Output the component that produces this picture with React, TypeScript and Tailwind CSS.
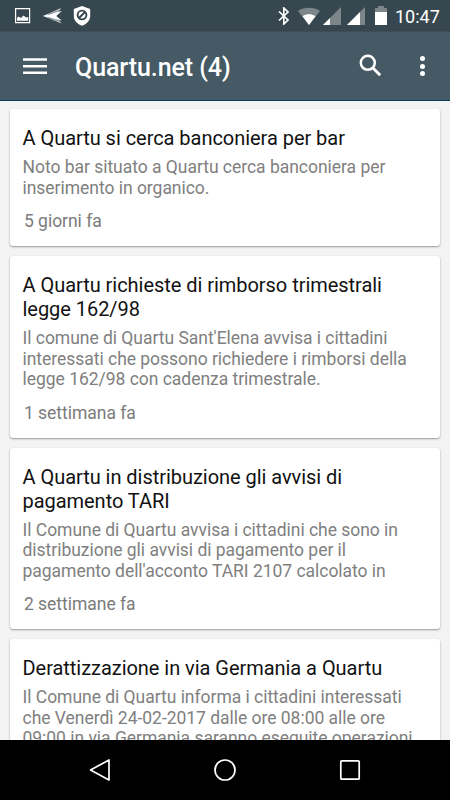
import type { ReactNode } from "react";

type NewsItem = {
  title: string[];
  text: string[];
  time?: string;
};

const news: NewsItem[] = [
  {
    title: ["A Quartu si cerca banconiera per bar"],
    text: ["Noto bar situato a Quartu cerca banconiera per", "inserimento in organico."],
    time: "5 giorni fa",
  },
  {
    title: ["A Quartu richieste di rimborso trimestrali", "legge 162/98"],
    text: [
      "Il comune di Quartu Sant'Elena avvisa i cittadini",
      "interessati che possono richiedere i rimborsi della",
      "legge 162/98 con cadenza trimestrale.",
    ],
    time: "1 settimana fa",
  },
  {
    title: ["A Quartu in distribuzione gli avvisi di", "pagamento TARI"],
    text: [
      "Il Comune di Quartu avvisa i cittadini che sono in",
      "distribuzione gli avvisi di pagamento per il",
      "pagamento dell'acconto TARI 2107 calcolato in",
    ],
    time: "2 settimane fa",
  },
  {
    title: ["Derattizzazione in via Germania a Quartu"],
    text: [
      "Il Comune di Quartu informa i cittadini interessati",
      "che Venerdì 24-02-2017 dalle ore 08:00 alle ore",
      "09:00 in via Germania saranno eseguite operazioni",
    ],
  },
];

function Line({ children }: { children: ReactNode }) {
  return <span className="block whitespace-nowrap">{children}</span>;
}

function StatusBar() {
  return (
    <div className="flex h-[31px] shrink-0 items-center bg-[#37474f] text-white">
      <svg className="ml-[15px] h-4 w-4" viewBox="0 0 16 16" fill="none">
        <path d="M.6.6h14v14H.6z" stroke="currentColor" strokeWidth="1.2" />
        <path d="M2 12.800V10l1.500-1.500L6 10l2.500-2.500L11 9.500l2.200-.5v3.800z" fill="currentColor" />
      </svg>
      <svg className="ml-[11px] h-4 w-[21px]" viewBox="0 0 21 16">
        <path d="M1 8 19 0l-4.500 8 5 7.500z" fill="#c3cbce" />
        <path d="M1 8 20 3l-6 5 6 4.500z" fill="white" />
        <path d="m6 6.500 13-4.500M6 9.500l13 4" stroke="#5b6a71" strokeWidth=".6" />
      </svg>
      <svg className="ml-[10px] h-5 w-[18px]" viewBox="0 0 18 20">
        <path d="M9 0 17.200 3v7c0 4.500-3.500 8-8.200 9.800C4.300 18 .8 14.500.8 10V3z" fill="white" />
        <circle cx="9" cy="9" r="4.400" fill="none" stroke="#37474f" strokeWidth="1.900" />
        <path d="m6 12 6-6" stroke="#37474f" strokeWidth="1.900" />
      </svg>
      <svg className="ml-auto h-[18px] w-3" viewBox="0 0 12 18" fill="none" stroke="currentColor" strokeWidth="1.700">
        <path d="m1 4.500 9 8.500-4.200 4V1L10 5l-9 8.500" />
      </svg>
      <svg className="ml-[8px] h-[18px] w-[22px]" viewBox="0 0 22 18">
        <path d="M0 4C6-.3 16-.3 22 4L11 18z" fill="#7c868b" />
        <path d="M4.500 9.300c4-2.600 9-2.600 13 0L11 18z" fill="white" />
      </svg>
      <svg className="ml-[3px] h-[18px] w-[18px]" viewBox="0 0 18 18">
        <path d="M0 18 18 0v18z" fill="#7c868b" />
        <path d="m0 18 7-7v7z" fill="white" />
      </svg>
      <svg className="ml-[6px] h-[18px] w-[18px]" viewBox="0 0 18 18">
        <path d="M0 18 18 0v18z" fill="#7c868b" />
        <path d="M0 18 13 5v13z" fill="white" />
      </svg>
      <svg className="ml-[9px] h-[19px] w-[14px]" viewBox="0 0 14 19">
        <path d="M1 2h3V0h6v2h3v4H1z" fill="#7c868b" />
        <path d="M1 6h12v13H1z" fill="white" />
      </svg>
      <span className="mr-[10px] ml-[7.5px] w-[45px] pt-[3px] text-[18px] leading-none whitespace-nowrap">10:47</span>
    </div>
  );
}

function Toolbar() {
  return (
    <header className="flex h-[70px] shrink-0 items-center border-t border-b border-t-[#3f4e56] border-b-[#07405a] bg-[#455a64] text-white">
      <svg className="ml-[23px] h-[17px] w-6" viewBox="0 0 24 17" fill="white">
        <path d="M0 .3h24v2.500H0zM0 6.900h24v2.500H0zM0 13.500h24V16H0z" />
      </svg>
      <h1 className="ml-[28px] pt-[3px] text-[25px] leading-[30px] font-medium tracking-[-0.08px] whitespace-nowrap">Quartu.net (4)</h1>
      <svg className="mr-[38px] mb-px ml-auto h-[23px] w-[23px]" viewBox="0 0 23 23" fill="none" stroke="currentColor">
        <circle cx="8.800" cy="8.800" r="7" strokeWidth="2.500" />
        <path d="m14 14 7.200 7.200" strokeWidth="2.900" />
      </svg>
      <div className="mr-[25px] flex flex-col gap-[2.5px]">
        <div className="h-[5px] w-[5px] rounded-full bg-white" />
        <div className="h-[5px] w-[5px] rounded-full bg-white" />
        <div className="h-[5px] w-[5px] rounded-full bg-white" />
      </div>
    </header>
  );
}

function NewsCard({ item }: { item: NewsItem }) {
  return (
    <article className="shrink-0 rounded-[3px] bg-white px-[12.5px] pt-[17px] pb-[14px] shadow-[0_1px_2px_rgba(0,0,0,0.38)]">
      <h2 className="text-[20px] leading-[24px] tracking-[-0.04px] text-[#111]">
        {item.title.map((line) => <Line key={line}>{line}</Line>)}
      </h2>
      <p className="mt-[7px] text-[17.5px] leading-[20.5px] tracking-[-0.03px] text-[#808080]">
        {item.text.map((line) => <Line key={line}>{line}</Line>)}
      </p>
      {item.time && (
        <p className="mt-[13px] ml-[1.5px] text-[17.5px] leading-[21px] tracking-[-0.03px] text-[#7b7b7b]">{item.time}</p>
      )}
    </article>
  );
}

function NavBar() {
  return (
    <nav className="flex h-[60px] shrink-0 items-center justify-center gap-[101px] bg-black text-white">
      <svg className="h-6 w-6" viewBox="0 0 24 24" fill="none" stroke="currentColor" strokeWidth="1.700" strokeLinejoin="round">
        <path d="M2.500 12 21 2v20z" />
      </svg>
      <svg className="h-6 w-6" viewBox="0 0 24 24" fill="none" stroke="currentColor" strokeWidth="1.700">
        <circle cx="12" cy="12" r="10" />
      </svg>
      <svg className="h-6 w-6" viewBox="0 0 24 24" fill="none" stroke="currentColor" strokeWidth="1.700">
        <rect x="2.800" y="2.800" width="18.400" height="18.400" rx="1" />
      </svg>
    </nav>
  );
}

export default function App() {
  return (
    <div className="flex h-[800px] w-[450px] flex-col overflow-hidden bg-[#f3f3f3] font-[Roboto,sans-serif]">
      <StatusBar />
      <Toolbar />
      <main className="flex min-h-0 flex-1 flex-col gap-[10px] overflow-hidden px-[10px] pt-[8px]">
        {news.map((item) => <NewsCard key={item.title[0]} item={item} />)}
      </main>
      <NavBar />
    </div>
  );
}
